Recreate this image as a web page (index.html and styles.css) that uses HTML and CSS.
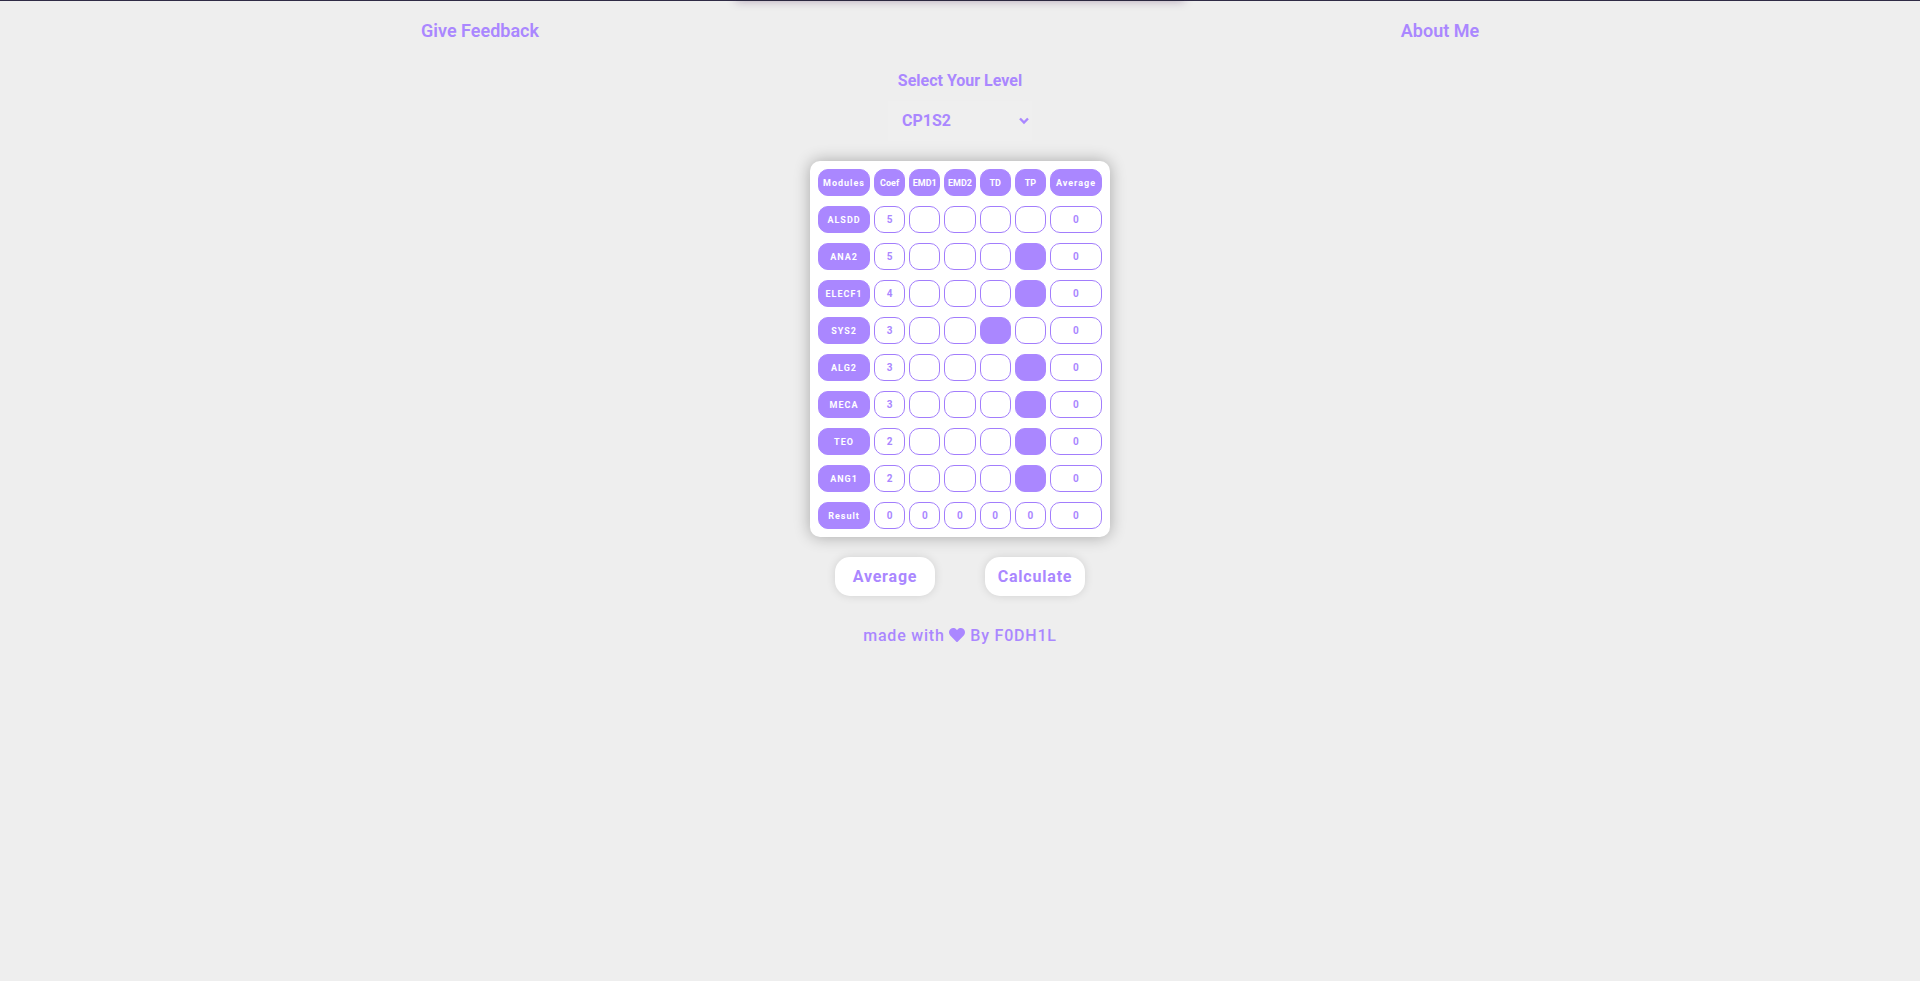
FILE: index.html
```
<!DOCTYPE html>
<html lang="en">
<head>
<meta charset="utf-8">
<meta name="viewport" content="width=device-width, initial-scale=1">
<title>Average Calculator</title>
<link rel="stylesheet" href="styles.css">
</head>
<body>
<div class="drawer"></div>
<nav class="nav">
  <a href="#feedback">Give Feedback</a>
  <a href="#about">About Me</a>
</nav>
<main class="main">
  <label class="level-label" for="level">Select Your Level</label>
  <div class="level">
    <select class="level-select" id="level"><option>CP1S2</option></select>
    <svg class="chevron" viewBox="0 0 10 8" aria-hidden="true"><path d="M1 1.500l4 4 4-4"/></svg>
  </div>
  <table class="grades">
    <thead>
      <tr><th>Modules</th><th class="tight">Coef</th><th class="tight">EMD1</th><th class="tight">EMD2</th><th class="tight">TD</th><th class="tight">TP</th><th>Average</th></tr>
    </thead>
    <tbody id="rows"></tbody>
    <tfoot>
      <tr><th>Result</th><td>0</td><td>0</td><td>0</td><td>0</td><td>0</td><td>0</td></tr>
    </tfoot>
  </table>
  <div class="actions">
    <button class="button" type="button">Average</button>
    <button class="button" type="button">Calculate</button>
  </div>
</main>
<footer class="footer">made with <svg class="heart" viewBox="0 0 512 512" role="img" aria-label="love"><path d="M462.300 62.600C407.500 15.900 326 24.300 275.700 76.200L256 96.500l-19.700-20.300C186.100 24.300 104.500 15.900 49.700 62.600c-62.800 53.600-66.100 149.800-9.900 207.900l193.500 199.800c12.500 12.900 32.800 12.900 45.300 0l193.500-199.800c56.300-58.100 53-154.300-9.800-207.900z"/></svg> By F0DH1L</footer>
<script src="script.js"></script>
</body>
</html>
```
FILE: styles.css
```
* { box-sizing: border-box; }

body {
  margin: 0;
  background: #eee;
  border-top: 1px solid #2f2b45;
  color: #aa87ff;
  font-family: Roboto, sans-serif;
}

.drawer {
  position: absolute;
  top: -20px;
  left: 50%;
  width: 448px;
  height: 21px;
  transform: translateX(-50%);
  background: #2b2840;
  box-shadow: 0 0 10px rgba(70, 30, 80, 0.35);
}

.nav {
  display: grid;
  grid-template-columns: 1fr 1fr;
  justify-items: center;
  padding: 19px 0;
  font-size: 18px;
  font-weight: 600;
  line-height: 22px;
}

.nav a {
  color: inherit;
  text-decoration: none;
}

.main {
  display: flex;
  flex-direction: column;
  align-items: center;
}

.level-label {
  padding-top: 10px;
  font-size: 16px;
  font-weight: 700;
  line-height: 20px;
}

.level {
  display: grid;
  align-items: center;
  width: 144px;
  margin: 10px 0 20px;
}

.level-select,
.chevron {
  grid-area: 1 / 1;
}

.level-select {
  appearance: none;
  width: 100%;
  height: 40px;
  padding: 0 14px;
  border: 0;
  background: #efefef;
  color: inherit;
  font: 700 16px/20px Roboto, sans-serif;
}

.chevron {
  justify-self: end;
  width: 10px;
  height: 8px;
  margin-right: 3px;
  fill: none;
  stroke: currentColor;
  stroke-width: 2.4;
  pointer-events: none;
}

.grades {
  display: flex;
  flex-direction: column;
  gap: 10px;
  width: 300px;
  padding: 8px;
  border-radius: 10px;
  background: #fff;
  box-shadow: 0 0 16px rgba(0, 0, 0, 0.3);
  font-size: 9px;
  font-weight: 700;
  letter-spacing: 1px;
}

.grades thead,
.grades tbody,
.grades tfoot {
  display: grid;
  gap: 10px;
}

.grades tr {
  display: grid;
  grid-template-columns: 5fr repeat(5, 3fr) 5fr;
  gap: 4px;
}

.grades th,
.grades td {
  display: flex;
  align-items: center;
  justify-content: center;
  min-width: 0;
  height: 27px;
  padding: 0;
  border: 1px solid #a27dfc;
  border-radius: 10px;
}

.grades td {
  font-size: 10px;
  letter-spacing: 0;
}

.grades th,
.grades .off {
  border-color: #aa87ff;
  background: #aa87ff;
  color: #fff;
}

.grades .tight {
  letter-spacing: 0;
}

.grade {
  width: 100%;
  height: 100%;
  padding: 0;
  border: 0;
  border-radius: 9px;
  background: transparent;
  color: inherit;
  font: inherit;
  text-align: center;
}

.actions {
  display: flex;
  gap: 50px;
  padding-top: 20px;
}

.button {
  width: 100px;
  height: 39px;
  padding: 0;
  border: 0;
  border-radius: 15px;
  background: #fff;
  box-shadow: 0 0 10px rgba(0, 0, 0, 0.12);
  color: inherit;
  font: 700 16px/20px Roboto, sans-serif;
  letter-spacing: 0.05em;
}

.footer {
  padding-top: 30px;
  text-align: center;
  font-size: 16px;
  font-weight: 500;
  line-height: 20px;
  letter-spacing: 0.05em;
}

.heart {
  width: 16px;
  height: 16px;
  vertical-align: -2px;
  fill: currentColor;
}
```
FILE: script.js
```
const modules = [
  ["ALSDD", 5, ""],
  ["ANA2", 5, "TP"],
  ["ELECF1", 4, "TP"],
  ["SYS2", 3, "TD"],
  ["ALG2", 3, "TP"],
  ["MECA", 3, "TP"],
  ["TEO", 2, "TP"],
  ["ANG1", 2, "TP"]
];
const exams = ["EMD1", "EMD2", "TD", "TP"];

document.getElementById("rows").innerHTML = modules.map(([name, coef, off]) => {
  const cells = exams.map(exam => exam === off
    ? '<td class="off"></td>'
    : `<td><input class="grade" type="text" aria-label="${name} ${exam}"></td>`);
  return `<tr><th>${name}</th><td>${coef}</td>${cells.join("")}<td>0</td></tr>`;
}).join("");
```
